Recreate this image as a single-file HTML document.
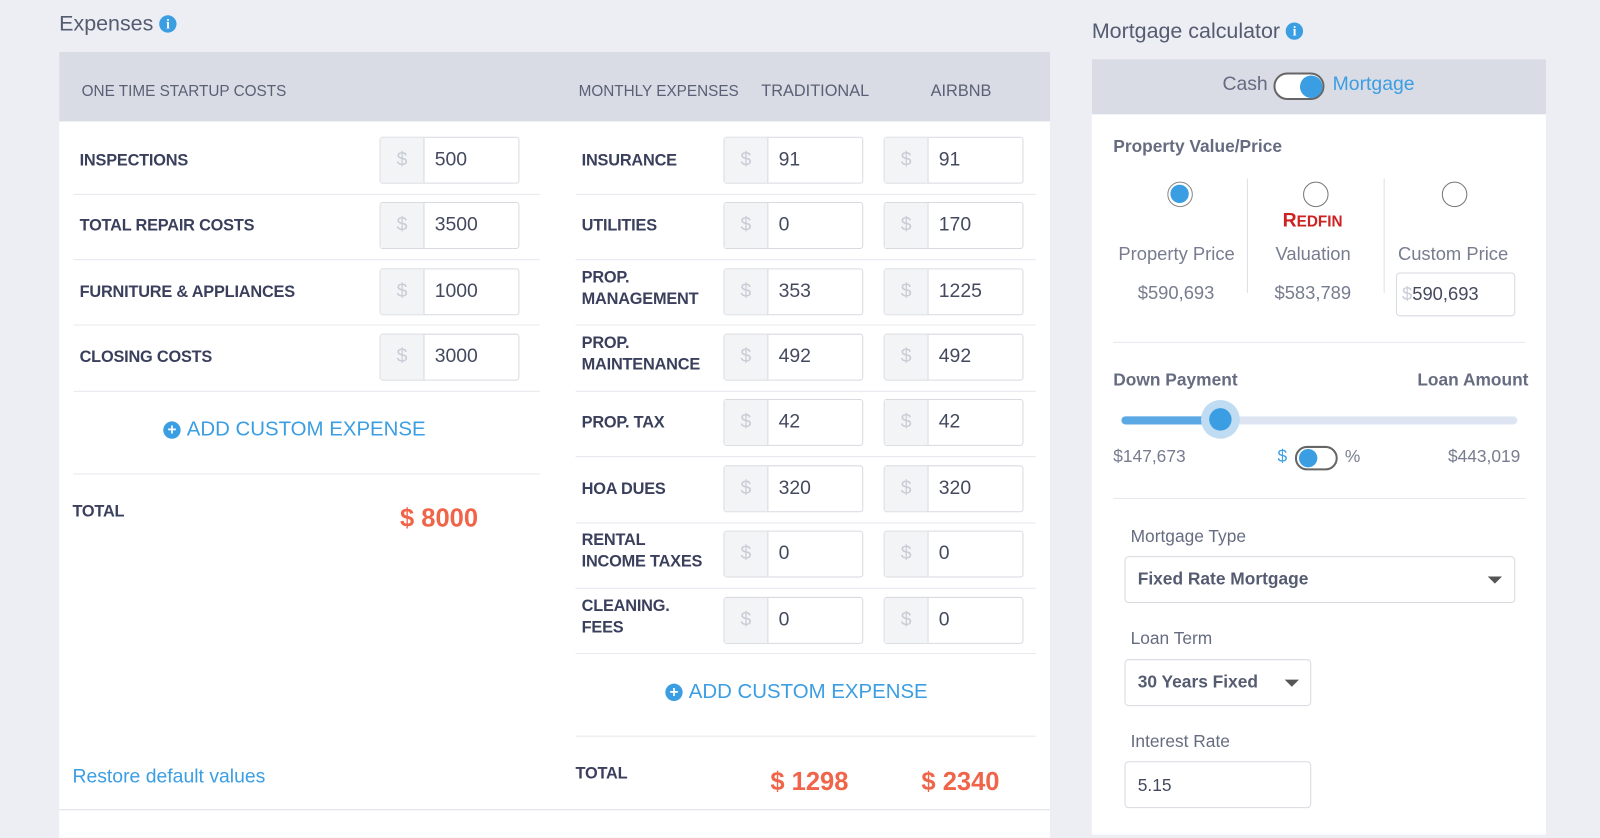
<!DOCTYPE html>
<html><head><style>
*{box-sizing:border-box;margin:0;padding:0}
body{width:1600px;height:815px;background:#eceef4;font-family:"Liberation Sans",sans-serif;position:relative;overflow:hidden;color:#3a3f5c}
#w{position:absolute;left:0;top:0;width:1568px;height:799px;transform:scale(1.0204);transform-origin:0 0}
.a{position:absolute}
.lbl{position:absolute;font-weight:bold;font-size:16px;color:#3a3f5c;line-height:21px;letter-spacing:-0.2px}
.inp{position:absolute;width:137px;height:46px;border:1px solid #d8dae0;border-radius:3px;background:#fff;display:flex}
.inp .p{width:43px;background:#f3f4f6;border-right:1px solid #d8dae0;color:#c8ccd6;font-size:19px;display:flex;align-items:center;justify-content:center}
.inp .v{padding-left:10px;font-size:19px;color:#444a5e;display:flex;align-items:center}
.sep{position:absolute;height:1px;background:#e6e8ee}
.hd{position:absolute;font-size:15px;color:#5a6075;top:81px}
.blue{color:#3b9ee3}
.red{color:#f0644a;font-weight:bold;font-size:25px}
.info{display:inline-block;width:17px;height:17px;border-radius:50%;background:#3b9ee3;color:#fff;font-size:13px;font-weight:bold;text-align:center;line-height:17px;font-family:"Liberation Serif",serif;vertical-align:2px}
.gl{position:absolute;font-size:18px;color:#777d8f}
.radio{position:absolute;width:25px;height:25px;border-radius:50%;border:1.5px solid #777;background:#fff}
.plus{display:inline-block;width:17px;height:17px;border-radius:50%;background:#3b9ee3;color:#fff;font-size:15px;line-height:17px;text-align:center;font-weight:bold;vertical-align:1px;margin-right:6px}
</style></head><body><div id="w">
<div class="a" style="left:58px;top:12px;font-size:21px;color:#555b70">Expenses <span class="info">i</span></div>
<div class="a" style="left:58px;top:51px;width:971px;height:770px;background:#fff"></div>
<div class="a" style="left:58px;top:51px;width:971px;height:68px;background:#d9dbe5"></div>
<div class="hd" style="left:80px">ONE TIME STARTUP COSTS</div>
<div class="hd" style="left:567px">MONTHLY EXPENSES</div>
<div class="hd" style="left:746px;font-size:16px">TRADITIONAL</div>
<div class="hd" style="left:912px;font-size:16px">AIRBNB</div>

<div class="lbl" style="left:78px;top:147px">INSPECTIONS</div>
<div class="inp" style="left:372px;top:134px"><div class="p">$</div><div class="v">500</div></div>
<div class="sep" style="left:72px;top:190px;width:457px"></div>
<div class="lbl" style="left:78px;top:211px">TOTAL REPAIR COSTS</div>
<div class="inp" style="left:372px;top:198px"><div class="p">$</div><div class="v">3500</div></div>
<div class="sep" style="left:72px;top:254px;width:457px"></div>
<div class="lbl" style="left:78px;top:276px">FURNITURE &amp; APPLIANCES</div>
<div class="inp" style="left:372px;top:263px"><div class="p">$</div><div class="v">1000</div></div>
<div class="sep" style="left:72px;top:318px;width:457px"></div>
<div class="lbl" style="left:78px;top:340px">CLOSING COSTS</div>
<div class="inp" style="left:372px;top:327px"><div class="p">$</div><div class="v">3000</div></div>
<div class="sep" style="left:72px;top:383px;width:457px"></div>
<div class="a blue" style="left:160px;top:410px;font-size:20px"><span class="plus">+</span>ADD CUSTOM EXPENSE</div>
<div class="sep" style="left:72px;top:464px;width:457px"></div>
<div class="lbl" style="left:71px;top:491px">TOTAL</div>
<div class="a red" style="left:392px;top:494px">$ 8000</div>
<div class="a blue" style="left:71px;top:751px;font-size:19px">Restore default values</div>

<div class="lbl" style="left:570px;top:147px">INSURANCE</div>
<div class="inp" style="left:709px;top:134px"><div class="p">$</div><div class="v">91</div></div>
<div class="inp" style="left:866px;top:134px"><div class="p">$</div><div class="v">91</div></div>
<div class="sep" style="left:564px;top:190px;width:451px"></div>
<div class="lbl" style="left:570px;top:211px">UTILITIES</div>
<div class="inp" style="left:709px;top:198px"><div class="p">$</div><div class="v">0</div></div>
<div class="inp" style="left:866px;top:198px"><div class="p">$</div><div class="v">170</div></div>
<div class="sep" style="left:564px;top:254px;width:451px"></div>
<div class="lbl" style="left:570px;top:262px">PROP.<br>MANAGEMENT</div>
<div class="inp" style="left:709px;top:263px"><div class="p">$</div><div class="v">353</div></div>
<div class="inp" style="left:866px;top:263px"><div class="p">$</div><div class="v">1225</div></div>
<div class="sep" style="left:564px;top:318px;width:451px"></div>
<div class="lbl" style="left:570px;top:326px">PROP.<br>MAINTENANCE</div>
<div class="inp" style="left:709px;top:327px"><div class="p">$</div><div class="v">492</div></div>
<div class="inp" style="left:866px;top:327px"><div class="p">$</div><div class="v">492</div></div>
<div class="sep" style="left:564px;top:383px;width:451px"></div>
<div class="lbl" style="left:570px;top:404px">PROP. TAX</div>
<div class="inp" style="left:709px;top:391px"><div class="p">$</div><div class="v">42</div></div>
<div class="inp" style="left:866px;top:391px"><div class="p">$</div><div class="v">42</div></div>
<div class="sep" style="left:564px;top:447px;width:451px"></div>
<div class="lbl" style="left:570px;top:469px">HOA DUES</div>
<div class="inp" style="left:709px;top:456px"><div class="p">$</div><div class="v">320</div></div>
<div class="inp" style="left:866px;top:456px"><div class="p">$</div><div class="v">320</div></div>
<div class="sep" style="left:564px;top:512px;width:451px"></div>
<div class="lbl" style="left:570px;top:519px">RENTAL<br>INCOME TAXES</div>
<div class="inp" style="left:709px;top:520px"><div class="p">$</div><div class="v">0</div></div>
<div class="inp" style="left:866px;top:520px"><div class="p">$</div><div class="v">0</div></div>
<div class="sep" style="left:564px;top:576px;width:451px"></div>
<div class="lbl" style="left:570px;top:584px">CLEANING.<br>FEES</div>
<div class="inp" style="left:709px;top:585px"><div class="p">$</div><div class="v">0</div></div>
<div class="inp" style="left:866px;top:585px"><div class="p">$</div><div class="v">0</div></div>
<div class="sep" style="left:564px;top:640px;width:451px"></div>
<div class="a blue" style="left:652px;top:667px;font-size:20px"><span class="plus">+</span>ADD CUSTOM EXPENSE</div>
<div class="sep" style="left:564px;top:721px;width:451px"></div>
<div class="lbl" style="left:564px;top:748px">TOTAL</div>
<div class="a red" style="left:755px;top:752px">$ 1298</div>
<div class="a red" style="left:903px;top:752px">$ 2340</div>
<div class="sep" style="left:58px;top:793px;width:971px;background:#dcdee6"></div>

<div class="a" style="left:1070px;top:19px;font-size:21px;color:#555b70">Mortgage calculator <span class="info">i</span></div>
<div class="a" style="left:1070px;top:58px;width:445px;height:760px;background:#fff"></div>
<div class="a" style="left:1070px;top:58px;width:445px;height:54px;background:#d9dbe5"></div>
<div class="a" style="left:1198px;top:72px;font-size:19px;color:#666c80">Cash</div>
<div class="a" style="left:1248px;top:71px;width:50px;height:27px;border:2px solid #666;border-radius:14px;background:#fff"><div class="a" style="left:24px;top:1px;width:22px;height:22px;border-radius:50%;background:#3b9ee3"></div></div>
<div class="a blue" style="left:1306px;top:72px;font-size:19px">Mortgage</div>
<div class="a" style="left:1091px;top:134px;font-size:17px;font-weight:bold;color:#666c80">Property Value/Price</div>
<div class="radio" style="left:1144px;top:178px;border-color:#888"><div class="a" style="left:2px;top:2px;width:18px;height:18px;border-radius:50%;background:#3b9ee3"></div></div>
<div class="radio" style="left:1277px;top:178px"></div>
<div class="radio" style="left:1413px;top:178px"></div>
<div class="a" style="left:1222px;top:175px;width:1px;height:112px;background:#dde0e6"></div>
<div class="a" style="left:1356px;top:175px;width:1px;height:112px;background:#dde0e6"></div>
<div class="a" style="left:1257px;top:206px;font-size:19px;font-weight:bold;color:#cc2222;">R<span style="font-size:15px">EDFIN</span></div>
<div class="gl" style="left:1096px;top:239px">Property Price</div>
<div class="gl" style="left:1250px;top:239px">Valuation</div>
<div class="gl" style="left:1370px;top:239px">Custom Price</div>
<div class="gl" style="left:1115px;top:277px">$590,693</div>
<div class="gl" style="left:1249px;top:277px">$583,789</div>
<div class="a" style="left:1368px;top:267px;width:117px;height:43px;border:1px solid #d8dae0;border-radius:4px;font-size:18px;color:#444a5e;padding:10px 5px"><span style="color:#c8ccd6">$</span>590,693</div>
<div class="sep" style="left:1091px;top:335px;width:404px"></div>
<div class="a" style="left:1091px;top:363px;font-size:17px;font-weight:bold;color:#666c80">Down Payment</div>
<div class="a" style="left:1389px;top:363px;font-size:17px;font-weight:bold;color:#666c80">Loan Amount</div>
<div class="a" style="left:1099px;top:408px;width:388px;height:8px;border-radius:4px;background:#dde5f3"></div>
<div class="a" style="left:1099px;top:408px;width:98px;height:8px;border-radius:4px;background:#5aa8e4"></div>
<div class="a" style="left:1177px;top:392px;width:38px;height:38px;border-radius:50%;background:#bfdcf2"></div>
<div class="a" style="left:1185px;top:400px;width:22px;height:22px;border-radius:50%;background:#3b9ee3"></div>
<div class="gl" style="left:1091px;top:438px;font-size:17px">$147,673</div>
<div class="a blue" style="left:1252px;top:438px;font-size:17px">$</div>
<div class="a" style="left:1269px;top:437px;width:42px;height:24px;border:2px solid #666;border-radius:12px"><div class="a" style="left:2px;top:1px;width:18px;height:18px;border-radius:50%;background:#3b9ee3"></div></div>
<div class="gl" style="left:1318px;top:438px;font-size:17px">%</div>
<div class="gl" style="left:1419px;top:438px;font-size:17px">$443,019</div>
<div class="sep" style="left:1091px;top:488px;width:404px"></div>
<div class="a" style="left:1108px;top:516px;font-size:17px;color:#666c80">Mortgage Type</div>
<div class="a" style="left:1102px;top:545px;width:383px;height:46px;border:1px solid #d8dae0;border-radius:4px;font-size:17px;font-weight:bold;color:#555b70;padding:12px 12px">Fixed Rate Mortgage<span class="a" style="right:12px;top:19px;border:7px solid transparent;border-top-color:#555;border-bottom:0"></span></div>
<div class="a" style="left:1108px;top:616px;font-size:17px;color:#666c80">Loan Term</div>
<div class="a" style="left:1102px;top:646px;width:183px;height:46px;border:1px solid #d8dae0;border-radius:4px;font-size:17px;font-weight:bold;color:#555b70;padding:12px 12px">30 Years Fixed<span class="a" style="right:11px;top:19px;border:7px solid transparent;border-top-color:#555;border-bottom:0"></span></div>
<div class="a" style="left:1108px;top:717px;font-size:17px;color:#666c80">Interest Rate</div>
<div class="a" style="left:1102px;top:746px;width:183px;height:46px;border:1px solid #d8dae0;border-radius:4px;font-size:17px;color:#444a5e;padding:13px 12px">5.15</div>
</div></body></html>
